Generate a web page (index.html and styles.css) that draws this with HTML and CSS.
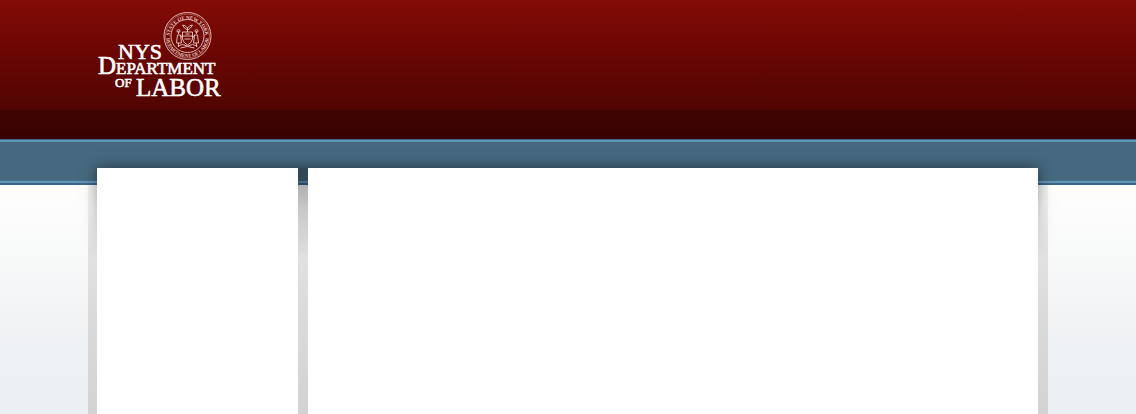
FILE: index.html
```html
<!DOCTYPE html>
<html lang="en">
<head>
<meta charset="utf-8">
<title>NYS Department of Labor</title>
<link rel="stylesheet" href="styles.css">
</head>
<body>
<header class="banner">
  <div class="banner-inner">
    <svg class="logo" viewBox="0 0 136 90" role="img" aria-label="NYS Department of Labor">
      <g class="seal" transform="translate(99.5 28)">
        <circle r="23.5"/>
        <circle r="22" class="faint"/>
        <circle r="16.5"/>
        <path id="seal-top" class="guide" d="M-17.6 5A18 18 0 1 1 17.6 5"/>
        <path id="seal-bottom" class="guide" d="M-21.3 2A21.4 21.4 0 0 0 21.3 2"/>
        <text class="seal-text"><textPath href="#seal-top" startOffset="50%">STATE OF NEW YORK</textPath></text>
        <text class="seal-text"><textPath href="#seal-bottom" startOffset="50%">DEPARTMENT OF LABOR</textPath></text>
        <path d="M-5-11q3 0 5 3q2-3 5-3l-2 3l-3 2l-3-2zM0-8v4M-5-4h10v7q-1 4-5 6q-4-2-5-6zM-5 0h10M-3 3h6M-2-2h4"/>
        <path d="M-9-5v3M-10-1h3l1 8h-5zM-9 7v4M-7-1l2 3M9-5v3M10-1h-3l-1 8h5zM9 7v4M7-1l-2 3"/>
        <path d="M-10 10q5-3 10 0q5-3 10 0M-7 12q7-3 14 0"/>
        <circle cx="-9" cy="-5" r="1.5"/>
        <circle cx="9" cy="-5" r="1.5"/>
      </g>
      <g class="wordmark">
        <text x="30" y="51" font-size="22">NYS</text>
        <text x="10" y="66" font-size="25">D<tspan font-size="17">EPARTMENT</tspan></text>
        <text x="27" y="79" font-size="13">OF</text>
        <text x="48" y="88" font-size="25">LABOR</text>
      </g>
    </svg>
  </div>
</header>
<nav class="bar" aria-label="Main"></nav>
<div class="page">
  <div class="page-shadow"></div>
  <aside class="panel"></aside>
  <main class="panel"></main>
</div>
</body>
</html>
```
FILE: styles.css
```css
* {
  box-sizing: border-box;
}

html {
  height: 100%;
}

body {
  display: flex;
  flex-direction: column;
  min-height: 100%;
  margin: 0;
  background: linear-gradient(#fefefd 185px, #f9fafa 245px, #f0f2f4 330px, #eaf0f4 390px);
  font-family: "Liberation Serif", serif;
}

.banner {
  padding: 8px 0 41px;
  background: linear-gradient(#840c06 0, #700703 40px, #500502 110px, #400402 110px, #380201 100%);
}

.banner-inner {
  width: 100%;
  max-width: 960px;
  margin: 0 auto;
}

.logo {
  display: block;
  width: 136px;
  height: 90px;
  overflow: visible;
}

.wordmark {
  fill: #fff;
  stroke: #fff;
  stroke-width: 0.6;
}

.seal {
  fill: none;
  stroke: #dcb8b4;
  stroke-width: 1;
}

.seal .faint {
  stroke: #a8544e;
}

.seal .guide {
  stroke: none;
}

.seal .seal-text {
  fill: #e6c8c4;
  stroke: none;
  font-size: 5px;
  font-weight: bold;
  text-anchor: middle;
}

.bar {
  height: 46px;
  border-top: 1px solid #416a89;
  border-bottom: 2px solid #3c668a;
  background: linear-gradient(#6393b5 2px, #46697f 2px, #46697f 40px, #43708f 40px, #43708f 41px, #6393b5 41px);
}

.page {
  position: relative;
  flex: 1;
  display: grid;
  grid-template-columns: 201px 1fr;
  gap: 10px;
  width: 100%;
  max-width: 960px;
  margin: -17px auto 0;
  padding: 0 10px 0 9px;
  background: linear-gradient(transparent 17px, #f6f6f5 17px, #e2e2e2 80px, #dadada 150px, #d3d3d3 100%);
}

/* Soft shadow behind the top of the panels, fading out down the gutters */
.page-shadow {
  position: absolute;
  top: -20px;
  right: -10px;
  left: -11px;
  height: 110px;
  overflow: hidden;
  mask-image: linear-gradient(#000 30px, rgba(0, 0, 0, 0.5) 60px, transparent);
}

.page-shadow::before {
  content: "";
  position: absolute;
  inset: 20px 20px -40px;
  background: rgba(0, 0, 0, 0.32);
  box-shadow: 0 0 14px rgba(0, 0, 0, 0.5);
}

.panel {
  position: relative;
  background: #fff;
}
```
